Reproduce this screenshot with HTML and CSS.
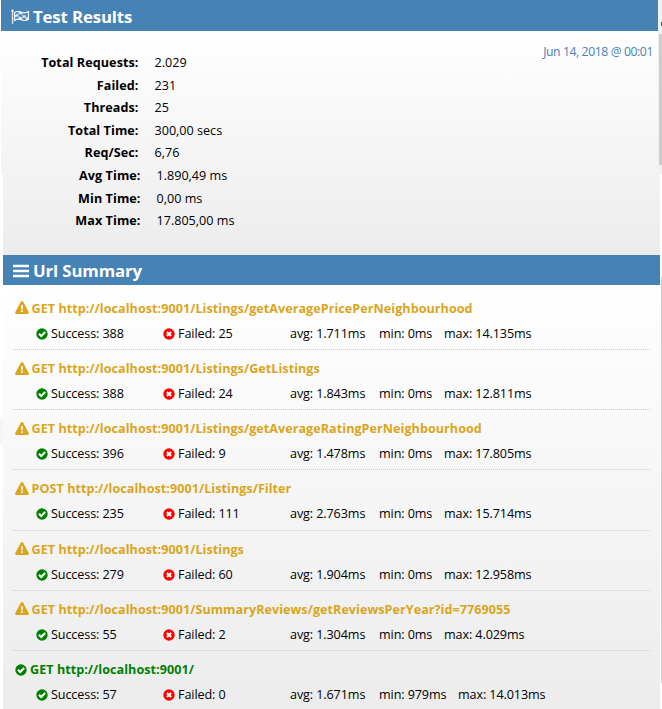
FILE: index.html
```html
<!DOCTYPE html>
<html lang="en">
<head>
<meta charset="utf-8">
<title>Test Results</title>
<link rel="stylesheet" href="styles.css">
</head>
<body>
<svg class="defs" aria-hidden="true">
  <symbol id="warn" viewBox="0 0 14 13"><path fill="currentColor" fill-rule="evenodd" d="M7 0c.5 0 .9.3 1.100.6l5.700 10.600c.4.8-.1 1.700-1 1.700H1.200c-.9 0-1.400-.9-1-1.700L5.900.6C6.100.3 6.500 0 7 0zM6 4.200l.25 4h1.500l.25-4zM6.100 9.300v1.700h1.800V9.300z"/></symbol>
  <symbol id="ok" viewBox="0 0 12 12"><circle cx="6" cy="6" r="5.700" fill="currentColor"/><path d="M2.900 5.700l2.300 2.300 4-4" fill="none" stroke="#fff" stroke-width="2"/></symbol>
  <symbol id="bad" viewBox="0 0 12 12"><circle cx="6" cy="6" r="5.700" fill="currentColor"/><path d="M3.900 3.900l4.200 4.200M8.100 3.900L3.900 8.100" fill="none" stroke="#fff" stroke-width="2.100"/></symbol>
</svg>
<main class="page">
  <section class="results">
    <h1 class="bar"><svg class="flag" viewBox="0 0 19 16"><path d="M1.500 1.500V15" stroke="#fff" stroke-width="1.300" opacity=".8"/><circle cx="1.500" cy="1.800" r="1.300" fill="#fff" opacity=".9"/><path d="M3.500 3.700C6 2.100 8 2.100 10.500 3.200s4.500.8 7-.7v7.800c-2.500 1.500-4.500 1.700-7 .5s-4.500-.9-7 .6z" fill="none" stroke="#fff" stroke-width="1.200"/><path d="M7.500 2.600v2.500c-1.500 0-2.500.4-4 1.200v2.500c1.500-.8 2.500-1.200 4-1.200v2.500c1.300 0 2.600.6 3.800 1.100V8.500c1.200.5 2.400.5 3.500.1v2.800l2.700-1V7.300c-.9.600-1.800 1-2.700 1.300V5.900c-1.100.5-2.300.5-3.500 0v2.600C10 8 8.800 7.500 7.500 7.600V5.100c1.300 0 2.500.3 3.800.8V3.500C10 3 9 2.600 7.500 2.600z" fill="#fff" opacity=".8"/></svg><span>Test Results</span></h1>
    <div class="body">
      <time class="date">Jun 14, 2018 @ 00:01</time>
      <dl class="stats">
        <div><dt>Total Requests:</dt><dd>2.029</dd></div>
        <div><dt>Failed:</dt><dd>231</dd></div>
        <div><dt>Threads:</dt><dd>25</dd></div>
        <div><dt>Total Time:</dt><dd>300,00 secs</dd></div>
        <div><dt>Req/Sec:</dt><dd>6,76</dd></div>
        <div class="shift"><dt>Avg Time:</dt><dd>1.890,49 ms</dd></div>
        <div class="shift"><dt>Min Time:</dt><dd>0,00 ms</dd></div>
        <div class="shift"><dt>Max Time:</dt><dd>17.805,00 ms</dd></div>
      </dl>
    </div>
  </section>
  <section class="summary">
    <h1 class="bar"><svg class="menu" viewBox="0 0 16 14"><path d="M0 2h16M0 7h16M0 12h16" stroke="#fff" stroke-width="2.400"/></svg><span>Url Summary</span></h1>
    <div class="list" id="list"></div>
  </section>
  <i class="edge"></i><i class="notch"></i>
  <i class="track"></i><i class="arrow"></i><i class="thumb"></i><i class="thumb lower"></i>
</main>
<script src="app.js"></script>
</body>
</html>
```
FILE: styles.css
```css
* { box-sizing: border-box; margin: 0; padding: 0; }
body { background: #fff; color: #000; font: 12.6px/22px "Open Sans", "Noto Sans", sans-serif; overflow: hidden; }
.defs { position: absolute; width: 0; height: 0; }
.page { position: relative; width: 662px; height: 709px; overflow: hidden; }
.bar { display: flex; align-items: center; height: 30px; background: #4682b4; color: #fff; font-size: 16.8px; font-weight: 700; line-height: 30px; }
.bar span { letter-spacing: -0.13px; }
.results { margin-left: 1px; width: 657px; height: 255px; display: flex; flex-direction: column; }
.results .bar { height: 31px; padding: 2px 0 0 10px; }
.flag { width: 19px; height: 16px; margin-right: 3px; }
.menu { width: 16px; height: 14px; margin-right: 4px; }
.body { flex: 1; display: flex; flex-direction: row-reverse; justify-content: space-between; background: linear-gradient(#fff, #ececec); width: 659px; }
.date { color: #4682b4; margin: 10px 7px 0 0; font-size: 12.2px; letter-spacing: -0.4px; white-space: nowrap; }
.stats { padding-top: 21px; }
.stats div { display: flex; height: 22.6px; }
.stats dt { width: 137.5px; text-align: right; font-weight: 700; letter-spacing: 0.07px; }
.stats dd { margin-left: 16px; white-space: nowrap; }
.stats .shift { padding-left: 2px; }
.summary { margin-left: 3px; width: 657px; }
.summary .bar { padding-left: 10px; padding-top: 1px; }
.list { height: 424px; padding: 4.900px 10px 0; background: linear-gradient(#fff, #ececec); }
.item { height: 60.2px; border-bottom: 1px dotted #ccc; padding-top: 7px; }
.url { display: flex; align-items: center; height: 24px; padding-left: 2px; color: #daa520; font-size: 12.6px; letter-spacing: 0.04px; font-weight: 700; white-space: nowrap; }
.url.good { color: green; }
.url .icon { width: 14px; height: 13px; margin: -2px 2.500px 0 0; }
.url.good .icon { width: 12px; height: 12px; margin: 0 3px 0 0; }
.line { display: flex; height: 26px; padding-left: 23px; letter-spacing: -0.1px; white-space: nowrap; }
.line > span { display: flex; align-items: center; }
.line .icon { width: 12px; height: 12px; margin-right: 3px; }
.line .success { width: 127px; }
.line .failed { width: 127px; }
.success .icon { color: green; }
.failed .icon { color: red; }
.line .avg { width: 89px; }
.line .min { width: 65px; }
.line .min.wide { width: 79px; }
.edge, .notch, .track, .arrow, .thumb { position: absolute; }
.edge { left: 1px; top: 174px; width: 2px; height: 81px; background: #fff; }
.notch { left: 0; top: 417px; width: 3px; height: 27px; background: #f5f5f5; }
.track { left: 658px; top: 0; width: 4px; height: 174px; background: #f1f1f1; }
.arrow { left: 661px; top: 22px; width: 1px; height: 4px; background: #555; }
.thumb { left: 659px; top: 34px; width: 3px; height: 131px; background: #cdcdcd; }
.thumb.lower { left: 661px; top: 277px; width: 1px; height: 406px; background: #cdcdcd; }
```
FILE: app.js
```js
const base = "http://localhost:9001/";
const rows = [
  ["GET", "Listings/getAveragePricePerNeighbourhood", 388, 25, "1.711", "0", "14.135"],
  ["GET", "Listings/GetListings", 388, 24, "1.843", "0", "12.811"],
  ["GET", "Listings/getAverageRatingPerNeighbourhood", 396, 9, "1.478", "0", "17.805"],
  ["POST", "Listings/Filter", 235, 111, "2.763", "0", "15.714"],
  ["GET", "Listings", 279, 60, "1.904", "0", "12.958"],
  ["GET", "SummaryReviews/getReviewsPerYear?id=7769055", 55, 2, "1.304", "0", "4.029"],
  ["GET", "", 57, 0, "1.671", "979", "14.013"]
];
const icon = name => `<svg class="icon"><use href="#${name}"/></svg>`;
document.getElementById("list").innerHTML = rows.map(([method, path, ok, bad, avg, min, max]) => `
  <article class="item">
    <h2 class="url ${bad ? "" : "good"}">${icon(bad ? "warn" : "ok")}<span>${method} ${base}${path}</span></h2>
    <div class="line">
      <span class="success">${icon("ok")}Success: ${ok}</span>
      <span class="failed">${icon("bad")}Failed: ${bad}</span>
      <span class="avg">avg: ${avg}ms</span>
      <span class="min ${min.length > 1 ? "wide" : ""}">min: ${min}ms</span>
      <span class="max">max: ${max}ms</span>
    </div>
  </article>`).join("");
```
